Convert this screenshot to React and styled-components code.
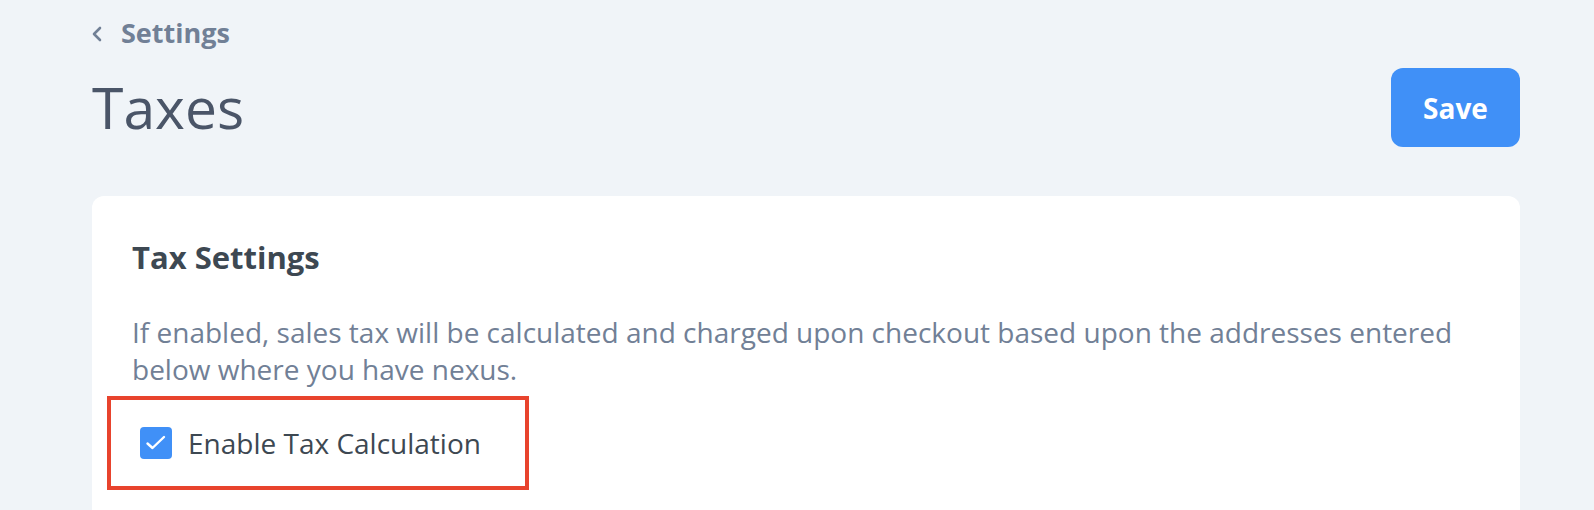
import React, { useState } from 'react';
import styled, { createGlobalStyle } from 'styled-components';

const GlobalStyle = createGlobalStyle`
    html, body {
        margin: 0;
        padding: 0;
        background-color: #f0f4f8;
        font-family: "Open Sans", "Noto Sans", sans-serif;
    }
`;

function App() {
    const [enabled, setEnabled] = useState(true);

    return (
        <>
            <GlobalStyle />
            <Page>
                <BackLink href="#">
                    <svg width="10" height="16" viewBox="0 0 10 16">
                        <polyline points="8,2 2,8 8,14" fill="none" stroke="currentColor" strokeWidth="2.6" strokeLinecap="round" strokeLinejoin="round" />
                    </svg>
                    <span>Settings</span>
                </BackLink>
                <HeaderRow>
                    <Title>Taxes</Title>
                    <SaveButton>Save</SaveButton>
                </HeaderRow>
                <Card>
                    <CardTitle>Tax Settings</CardTitle>
                    <Description>
                        If enabled, sales tax will be calculated and charged upon checkout based upon the addresses entered
                        below where you have nexus.
                    </Description>
                    <Highlight>
                        <CheckRow onClick={() => setEnabled(!enabled)}>
                            <CheckBox checked={enabled}>
                                {enabled && (
                                    <svg width="32" height="32" viewBox="0 0 32 32">
                                        <polyline points="7.5,16.5 12.5,21 24,10" fill="none" stroke="#fff" strokeWidth="2.4" strokeLinecap="round" strokeLinejoin="round" />
                                    </svg>
                                )}
                            </CheckBox>
                            <CheckLabel>Enable Tax Calculation</CheckLabel>
                        </CheckRow>
                    </Highlight>
                </Card>
            </Page>
        </>
    );
}

export default App;

const Page = styled.div`
    padding: 16px 74px 0 92px;
`

const BackLink = styled.a`
    display: inline-flex;
    align-items: center;
    gap: 19px;
    color: #718096;
    text-decoration: none;
    font-size: 27px;
    font-weight: 700;
    line-height: 34px;
    svg {
        margin-top: 2px;
    }
`

const HeaderRow = styled.div`
    display: flex;
    align-items: center;
    justify-content: space-between;
    margin-top: 18px;
`

const Title = styled.h1`
    margin: 0;
    font-size: 57px;
    font-weight: 500;
    line-height: 67px;
    color: #4a5568;
`

const SaveButton = styled.button`
    width: 129px;
    height: 79px;
    border: none;
    border-radius: 12px;
    background-color: #4090f7;
    color: #fff;
    font-family: inherit;
    font-size: 28px;
    font-weight: 700;
    cursor: pointer;
`

const Card = styled.div`
    margin-top: 49px;
    background-color: #fff;
    border-radius: 12px;
    padding: 42px 40px 80px;
`

const CardTitle = styled.h2`
    margin: 0;
    font-size: 31px;
    font-weight: 700;
    line-height: 38px;
    color: #3d4852;
`

const Description = styled.p`
    margin: 38px 0 0;
    font-size: 28px;
    line-height: 36.6px;
    color: #718096;
`

const Highlight = styled.div`
    display: inline-flex;
    margin: 9px 0 0 -25px;
    border: 4px solid #e8432d;
    padding: 27px 44px 27px 29px;
`

const CheckRow = styled.label`
    display: flex;
    align-items: center;
    gap: 16px;
    cursor: pointer;
`

const CheckBox = styled.span`
    width: 32px;
    height: 32px;
    border-radius: 4px;
    display: flex;
    align-items: center;
    justify-content: center;
    background-color: ${p => (p.checked ? '#4090f7' : '#fff')};
    border: ${p => (p.checked ? 'none' : '2px solid #cbd5e0')};
    box-sizing: border-box;
`

const CheckLabel = styled.span`
    font-size: 28px;
    line-height: 32px;
    color: #3d4852;
`
